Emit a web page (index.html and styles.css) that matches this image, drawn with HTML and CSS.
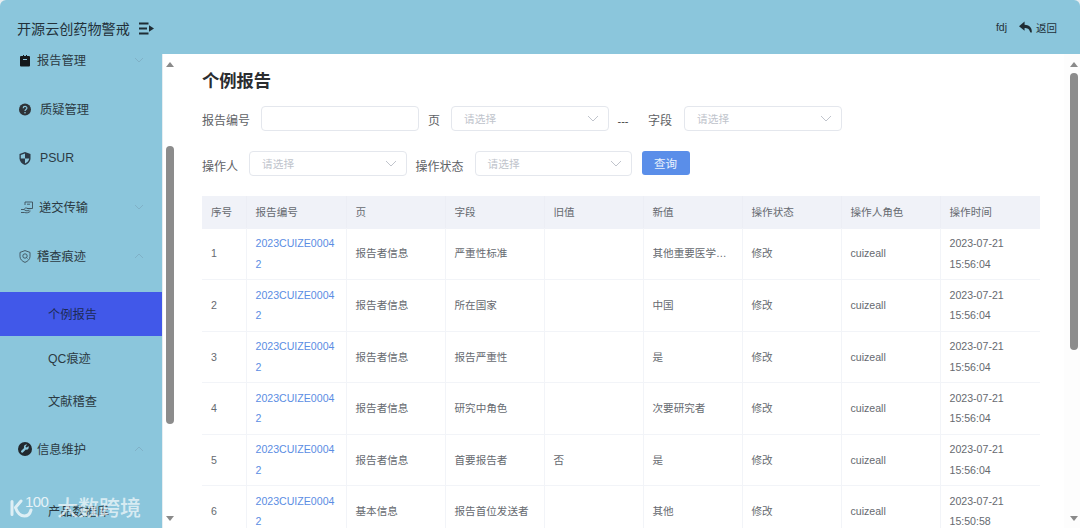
FILE: index.html
```html
<!DOCTYPE html>
<html lang="zh">
<head>
<meta charset="utf-8">
<title>个例报告</title>
<link rel="stylesheet" href="styles.css">
</head>
<body>
<div class="app">
  <header class="topbar">
    <div class="brand">
      <span class="brand-name">开源云创药物警戒</span>
      <svg class="fold" viewBox="0 0 15 13" width="15" height="13"><path d="M0 1.500h9.500M0 6.500h8M0 11.500h9.500" stroke="#1f2c34" stroke-width="2" fill="none"/><path d="M10 3.200l5 3.300-5 3.300z" fill="#1f2c34"/></svg>
    </div>
    <div class="user">
      <span>fdj</span>
      <span class="back">
        <svg viewBox="0 0 14 14" width="13" height="14"><path d="M6 1L0 6.200 6 11V8c3 0 5 .8 6 4.500 1 1.200 1.800.6 1.800-1C13.800 7 10.500 4.600 6 4.500z" fill="#1f2c34"/></svg>
        返回
      </span>
    </div>
  </header>
  <div class="body">
    <aside class="side">
      <nav class="menu">
        <div class="item">
          <svg class="ico" viewBox="0 0 12 12"><path d="M2 1.500h2V.5h1v1h2V.5h1v1h2a1 1 0 0 1 1 1V11a1 1 0 0 1-1 1H2a1 1 0 0 1-1-1V2.500a1 1 0 0 1 1-1z" fill="#14181b"/><rect x="4" y="4.500" width="4" height="1" fill="#8bc6dc"/></svg>
          <span class="lbl">报告管理</span>
          <svg class="chev" viewBox="0 0 10 6"><path d="M1 1l4 4 4-4" fill="none" stroke="#7fafc4" stroke-width=".9"/></svg>
        </div>
        <div class="item">
          <svg class="ico" viewBox="0 0 12 12"><circle cx="6" cy="6" r="6" fill="#2e3337"/><path d="M4.200 4.700c0-2.300 3.700-2.300 3.700-.1 0 1.400-1.900 1.400-1.900 2.800" fill="none" stroke="#8bc6dc" stroke-width="1.200"/><circle cx="6" cy="9.200" r=".8" fill="#8bc6dc"/></svg>
          <span class="lbl lbl-wide">质疑管理</span>
        </div>
        <div class="item">
          <svg class="ico" viewBox="0 0 12 13"><path d="M6 0l5.500 2v4.500c0 3-2.500 5.300-5.500 6.500C3 11.800.5 9.500.5 6.500V2z" fill="#2c3a47"/><path d="M6 1.500v5H1.800V3zM6 6.500h4.200c-.2 2.300-2 3.900-4.200 5z" fill="#8bc6dc"/></svg>
          <span class="lbl lbl-wide">PSUR</span>
        </div>
        <div class="item">
          <svg class="ico ico-wide" viewBox="0 0 14 13"><path d="M5 4V1h7.500v6.500H7M7 3.200h3M1 8.500h3l2 1.200h3.500M4.500 7.500c1-.8 2.500-.5 3.500.2h2.500M1 11.500h3.500c2 .6 4.500.4 6-1.500" fill="none" stroke="#3d4f59" stroke-width=".9"/></svg>
          <span class="lbl">递交传输</span>
          <svg class="chev" viewBox="0 0 10 6"><path d="M1 1l4 4 4-4" fill="none" stroke="#7fafc4" stroke-width=".9"/></svg>
        </div>
        <div class="item">
          <svg class="ico" viewBox="0 0 12 13"><path d="M6 .6l5 1.800v4.100c0 2.800-2.200 4.800-5 5.900C3.200 11.300 1 9.300 1 6.500V2.400z" fill="none" stroke="#3d4f59" stroke-width=".9"/><circle cx="6" cy="6" r="2.200" fill="none" stroke="#3d4f59" stroke-width=".9"/><path d="M7.500 7.500l1 1" stroke="#3d4f59" stroke-width=".9"/></svg>
          <span class="lbl">稽查痕迹</span>
          <svg class="chev" viewBox="0 0 10 6"><path d="M1 5l4-4 4 4" fill="none" stroke="#7fafc4" stroke-width=".9"/></svg>
        </div>
        <div class="sub sub-active">个例报告</div>
        <div class="sub sub-qc">QC痕迹</div>
        <div class="sub">文献稽查</div>
        <div class="item item-info">
          <svg class="ico ico-round" viewBox="0 0 13 13"><circle cx="6.500" cy="6.500" r="6.500" fill="#22292e"/><path d="M9.800 3.600L8.200 5.100 7.300 4.800 7 3.900l1.500-1.500C7 1.900 5.400 3 5.500 4.600c0 .4.100.6.200.9L3 8.200c-.8 1 .6 2.300 1.500 1.500l2.800-2.700c1.700.6 3.200-1.200 2.500-3.400z" fill="#8bc6dc"/></svg>
          <span class="lbl lbl-tight">信息维护</span>
          <svg class="chev" viewBox="0 0 10 6"><path d="M1 5l4-4 4 4" fill="none" stroke="#7fafc4" stroke-width=".9"/></svg>
        </div>
        <div class="sub sub-last">产品数据库</div>
      </nav>
    </aside>
    <div class="rail rail-side">
      <i class="tri tri-up"></i>
      <div class="track"><div class="thumb thumb-side"></div></div>
      <i class="tri tri-down"></i>
    </div>
    <main class="main">
      <h1 class="title">个例报告</h1>
      <div class="filters">
        <span class="f-label f-no">报告编号</span>
        <span class="box box-input"></span>
        <span class="f-label f-page">页</span>
        <span class="box"><em>请选择</em><svg viewBox="0 0 12 7"><path d="M1 1l5 5 5-5" fill="none" stroke="#c0c4cc"/></svg></span>
        <span class="f-dash">---</span>
        <span class="f-label f-field">字段</span>
        <span class="box"><em>请选择</em><svg viewBox="0 0 12 7"><path d="M1 1l5 5 5-5" fill="none" stroke="#c0c4cc"/></svg></span>
      </div>
      <div class="filters filters-low">
        <span class="f-label f-op">操作人</span>
        <span class="box"><em>请选择</em><svg viewBox="0 0 12 7"><path d="M1 1l5 5 5-5" fill="none" stroke="#c0c4cc"/></svg></span>
        <span class="f-label f-state">操作状态</span>
        <span class="box box-state"><em>请选择</em><svg viewBox="0 0 12 7"><path d="M1 1l5 5 5-5" fill="none" stroke="#c0c4cc"/></svg></span>
        <button class="query">查询</button>
      </div>
      <table class="grid">
        <colgroup><col class="c-no"><col class="c-id"><col class="c"><col class="c"><col class="c"><col class="c"><col class="c"><col class="c"><col class="c-end"></colgroup>
        <thead><tr><th>序号</th><th>报告编号</th><th>页</th><th>字段</th><th>旧值</th><th>新值</th><th>操作状态</th><th>操作人角色</th><th>操作时间</th></tr></thead>
        <tbody>
          <tr><td>1</td><td><a>2023CUIZE00042</a></td><td>报告者信息</td><td>严重性标准</td><td></td><td><div class="clip">其他重要医学事件</div></td><td>修改</td><td>cuizeall</td><td>2023-07-21 15:56:04</td></tr>
          <tr><td>2</td><td><a>2023CUIZE00042</a></td><td>报告者信息</td><td>所在国家</td><td></td><td>中国</td><td>修改</td><td>cuizeall</td><td>2023-07-21 15:56:04</td></tr>
          <tr><td>3</td><td><a>2023CUIZE00042</a></td><td>报告者信息</td><td>报告严重性</td><td></td><td>是</td><td>修改</td><td>cuizeall</td><td>2023-07-21 15:56:04</td></tr>
          <tr><td>4</td><td><a>2023CUIZE00042</a></td><td>报告者信息</td><td>研究中角色</td><td></td><td>次要研究者</td><td>修改</td><td>cuizeall</td><td>2023-07-21 15:56:04</td></tr>
          <tr><td>5</td><td><a>2023CUIZE00042</a></td><td>报告者信息</td><td>首要报告者</td><td>否</td><td>是</td><td>修改</td><td>cuizeall</td><td>2023-07-21 15:56:04</td></tr>
          <tr><td>6</td><td><a>2023CUIZE00042</a></td><td>基本信息</td><td>报告首位发送者</td><td></td><td>其他</td><td>修改</td><td>cuizeall</td><td>2023-07-21 15:50:58</td></tr>
        </tbody>
      </table>
    </main>
    <div class="rail rail-main">
      <i class="tri tri-up"></i>
      <div class="track"><div class="thumb thumb-main"></div></div>
      <i class="tri tri-down"></i>
    </div>
  </div>
  <div class="mark">
    <svg viewBox="0 0 24 24" width="24" height="24"><path d="M3 5.500v13M12 5L6.500 11.500C8 16 11 20 15.500 20c3 0 5.500-2.200 6.500-6" fill="none" stroke="#fff" stroke-width="3" stroke-linecap="round" stroke-linejoin="round"/></svg>
    <span class="mark-100">100</span>
    <span class="mark-text">大数跨境</span>
  </div>
</div>
</body>
</html>
```
FILE: styles.css
```css
* { box-sizing: border-box; }
html, body { margin: 0; height: 100%; overflow: hidden; background: #e8eef1; }
body { font-family: "Liberation Sans", "Noto Sans CJK SC", sans-serif; color: #606266; }
.app { position: relative; width: 1080px; height: 528px; display: flex; flex-direction: column; overflow: hidden; }

.topbar { flex: 0 0 54px; background: #8bc6dc; border-radius: 6px 6px 0 0; display: flex; align-items: center; justify-content: space-between; padding: 2px 23px 0 17px; color: #23313a; }
.brand { display: flex; align-items: center; gap: 9px; }
.brand-name { font-size: 14.100px; }
.fold { display: block; }
.user { display: flex; align-items: center; gap: 12px; font-size: 10.500px; margin-top: -2px; }
.back { display: flex; align-items: center; gap: 4px; }

.body { flex: 1; min-height: 0; display: flex; background: #fff; }
.side { flex: 0 0 162px; background: #8bc6dc; overflow: hidden; }
.menu { margin-top: -18.500px; color: #2b3a43; font-size: 12.250px; }
.item { height: 49px; display: flex; align-items: center; padding-left: 19px; position: relative; }
.item-info { margin-top: 1px; padding-left: 18px; }
.ico { width: 12px; height: 13px; flex: none; }
.ico-wide { width: 14px; margin-left: 1px; margin-right: -1px; }
.ico-round { width: 14px; height: 14px; }
.lbl { margin-left: 6px; }
.lbl-wide { margin-left: 9px; }
.lbl-tight { margin-left: 5px; }
.chev { position: absolute; left: 134px; top: 21px; width: 10px; height: 6px; }
.sub { height: 44px; line-height: 44px; padding-left: 48px; }
.sub-active { background: #4158e9; margin-top: 11.500px; color: #1c2a55; line-height: 46px; }
.sub-qc { height: 43.500px; line-height: 46px; }
.sub-last { margin-top: 16px; }

.rail { flex: 0 0 16px; background: #fff; display: flex; flex-direction: column; align-items: center; padding: 8px 0 7px; }
.rail-side { padding-right: 1px; border-left: 1px solid #e6eef2; }
.rail-main { padding-left: 4px; background: #fdfdfd; }
.track { flex: 1; width: 8px; }
.thumb { background: #8c8c8c; border-radius: 4px; width: 8px; }
.thumb-side { height: 278px; margin-top: 79px; }
.thumb-main { height: 277px; margin-top: 6px; }
.tri { width: 0; height: 0; border-left: 4px solid transparent; border-right: 4px solid transparent; flex: none; }
.tri-up { border-bottom: 5px solid #8a8a8a; }
.tri-down { border-top: 5px solid #8a8a8a; }

.main { flex: 1; min-width: 0; padding: 0 24px; overflow: hidden; }
.title { margin: 16px 0 14px; font-size: 17.300px; line-height: 22px; font-weight: 700; color: #2b2d30; }
.filters { display: flex; align-items: center; height: 25px; margin-bottom: 20px; font-size: 12px; }
.f-label { position: relative; top: 2px; line-height: 16px; }
.filters-low .f-label { top: 3px; }
.f-no { margin-right: 11px; }
.f-page { margin: 0 11px 0 9.500px; }
.f-dash { margin: 0 18.500px 0 9px; color: #444; width: 12px; white-space: nowrap; font-size: 11px; position: relative; top: 2px; }
.f-field { margin-right: 12px; }
.f-op { margin-right: 11px; }
.f-state { margin: 0 11px 0 9px; }
.box { width: 157.500px; height: 25px; background: #fff; border: 1px solid #e4e7ed; border-radius: 4px; display: flex; align-items: center; justify-content: space-between; padding: 0 9px 0 12px; flex: none; }
.box em { font-style: normal; font-size: 10.700px; color: #c0c4cc; }
.box svg { width: 12px; height: 7px; }
.query { width: 48px; height: 24px; margin: -1px 0 0 9.500px; background: #5a8ee9; border: 0; border-radius: 3px; color: #eaf2fd; font: inherit; font-size: 11.500px; padding: 0; }

.grid { width: 838px; border-collapse: collapse; table-layout: fixed; font-size: 10.600px; color: #666a70; }
.c-no { width: 44px; }
.c-id { width: 100px; }
.c { width: 99px; }
.c-end { width: 100px; }
th { height: 32px; background: #f0f2f8; box-shadow: 0 1px 0 #f0f2f8; font-weight: 400; text-align: left; padding: 0 9px 1px; border-right: 1px solid #eceef5; }
th:last-child { border-right: 0; }
td { height: 51.500px; padding: 0 9px; line-height: 20.400px; border-bottom: 1px solid #f2f4f8; border-right: 1px solid #f2f4f8; }
td:last-child { border-right: 0; }
td a { color: #5b8de3; word-break: break-all; }
.clip { white-space: nowrap; overflow: hidden; text-overflow: ellipsis; }

.mark { position: absolute; left: 9px; top: 494px; display: flex; align-items: center; color: rgba(255,255,255,.68); pointer-events: none; }
.mark svg { opacity: .72; }
.mark-100 { font-size: 15px; letter-spacing: -.6px; margin: -14px 0 0 -8px; color: rgba(255,255,255,.8); width: 32px; }
.mark-text { font-size: 21px; line-height: 28px; font-weight: 500; }
```
